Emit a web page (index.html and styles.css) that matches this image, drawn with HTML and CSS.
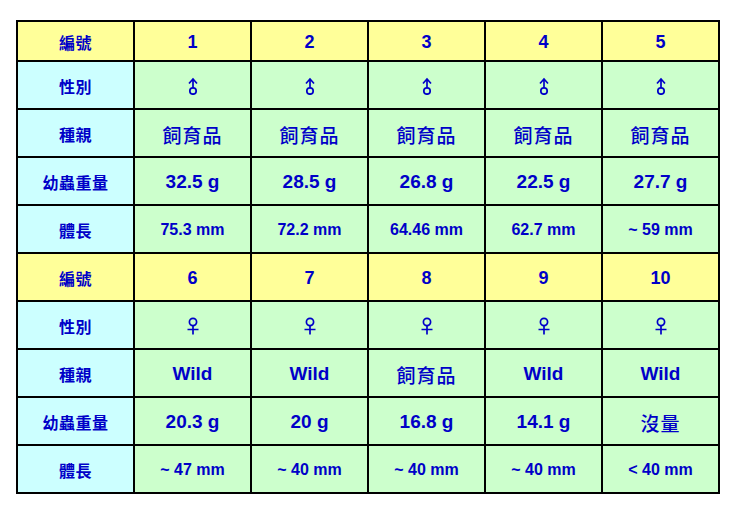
FILE: index.html
```html
<!DOCTYPE html>
<html>
<head>
<meta charset="utf-8">
<link rel="stylesheet" href="styles.css">
</head>
<body>
<div class="sheet">
  <div class="cell label head">編號</div>
  <div class="cell head num">1</div>
  <div class="cell head num">2</div>
  <div class="cell head num">3</div>
  <div class="cell head num">4</div>
  <div class="cell head num">5</div>

  <div class="cell label">性別</div>
  <div class="cell data"><svg class="male" viewBox="0 0 12 18"><path d="M2 6.5 L6 2 L10 6.5 M6 2 V11" /><circle cx="6" cy="14" r="3.2"/></svg></div>
  <div class="cell data"><svg class="male" viewBox="0 0 12 18"><path d="M2 6.5 L6 2 L10 6.5 M6 2 V11" /><circle cx="6" cy="14" r="3.2"/></svg></div>
  <div class="cell data"><svg class="male" viewBox="0 0 12 18"><path d="M2 6.5 L6 2 L10 6.5 M6 2 V11" /><circle cx="6" cy="14" r="3.2"/></svg></div>
  <div class="cell data"><svg class="male" viewBox="0 0 12 18"><path d="M2 6.5 L6 2 L10 6.5 M6 2 V11" /><circle cx="6" cy="14" r="3.2"/></svg></div>
  <div class="cell data"><svg class="male" viewBox="0 0 12 18"><path d="M2 6.5 L6 2 L10 6.5 M6 2 V11" /><circle cx="6" cy="14" r="3.2"/></svg></div>

  <div class="cell label">種親</div>
  <div class="cell data cjk">飼育品</div>
  <div class="cell data cjk">飼育品</div>
  <div class="cell data cjk">飼育品</div>
  <div class="cell data cjk">飼育品</div>
  <div class="cell data cjk">飼育品</div>

  <div class="cell label">幼蟲重量</div>
  <div class="cell data big">32.5 g</div>
  <div class="cell data big">28.5 g</div>
  <div class="cell data big">26.8 g</div>
  <div class="cell data big">22.5 g</div>
  <div class="cell data big">27.7 g</div>

  <div class="cell label">體長</div>
  <div class="cell data small">75.3 mm</div>
  <div class="cell data small">72.2 mm</div>
  <div class="cell data small">64.46 mm</div>
  <div class="cell data small">62.7 mm</div>
  <div class="cell data small">~ 59 mm</div>

  <div class="cell label head">編號</div>
  <div class="cell head num">6</div>
  <div class="cell head num">7</div>
  <div class="cell head num">8</div>
  <div class="cell head num">9</div>
  <div class="cell head num">10</div>

  <div class="cell label">性別</div>
  <div class="cell data"><svg class="female" viewBox="0 0 14 18"><circle cx="7" cy="5" r="3.6"/><path d="M7 8.6 V17.5 M1.5 12.5 H12.5"/></svg></div>
  <div class="cell data"><svg class="female" viewBox="0 0 14 18"><circle cx="7" cy="5" r="3.6"/><path d="M7 8.6 V17.5 M1.5 12.5 H12.5"/></svg></div>
  <div class="cell data"><svg class="female" viewBox="0 0 14 18"><circle cx="7" cy="5" r="3.6"/><path d="M7 8.6 V17.5 M1.5 12.5 H12.5"/></svg></div>
  <div class="cell data"><svg class="female" viewBox="0 0 14 18"><circle cx="7" cy="5" r="3.6"/><path d="M7 8.6 V17.5 M1.5 12.5 H12.5"/></svg></div>
  <div class="cell data"><svg class="female" viewBox="0 0 14 18"><circle cx="7" cy="5" r="3.6"/><path d="M7 8.6 V17.5 M1.5 12.5 H12.5"/></svg></div>

  <div class="cell label">種親</div>
  <div class="cell data big">Wild</div>
  <div class="cell data big">Wild</div>
  <div class="cell data cjk">飼育品</div>
  <div class="cell data big">Wild</div>
  <div class="cell data big">Wild</div>

  <div class="cell label">幼蟲重量</div>
  <div class="cell data big">20.3 g</div>
  <div class="cell data big">20 g</div>
  <div class="cell data big">16.8 g</div>
  <div class="cell data big">14.1 g</div>
  <div class="cell data cjk">沒量</div>

  <div class="cell label">體長</div>
  <div class="cell data small">~ 47 mm</div>
  <div class="cell data small">~ 40 mm</div>
  <div class="cell data small">~ 40 mm</div>
  <div class="cell data small">~ 40 mm</div>
  <div class="cell data small">&lt; 40 mm</div>
</div>
</body>
</html>
```

FILE: styles.css
```css
html, body {
  margin: 0;
  padding: 0;
  background: #ffffff;
}

body {
  padding: 20px 0 0 16px;
  font-family: "Liberation Sans", Arial, "Noto Sans CJK TC", sans-serif;
  color: #0000c8;
}

.sheet {
  display: grid;
  width: 704px;
  grid-template-columns: repeat(6, 115px);
  grid-template-rows: 38px repeat(9, 46px);
  gap: 2px;
  padding: 2px;
  box-sizing: border-box;
  background: #000000;
}

.cell {
  display: flex;
  align-items: center;
  justify-content: center;
  padding-top: 2px;
  background: #ccffcc;
  font-weight: bold;
}

.label {
  background: #ccffff;
  font-family: "Noto Sans CJK TC", sans-serif;
  font-size: 16px;
  font-weight: 700;
  letter-spacing: 0.5px;
}

.head {
  background: #ffff99;
}

.num {
  font-size: 18px;
}

.big {
  font-size: 19px;
}

.small {
  font-size: 16px;
}

.cjk {
  font-family: "Noto Sans CJK TC", sans-serif;
  font-size: 19px;
  font-weight: 500;
  letter-spacing: 1px;
}

.male {
  width: 12px;
  height: 18px;
  fill: none;
  stroke: #0000c8;
  stroke-width: 1.7;
}

.female {
  width: 14px;
  height: 18px;
  fill: none;
  stroke: #0000c8;
  stroke-width: 1.7;
}
```
